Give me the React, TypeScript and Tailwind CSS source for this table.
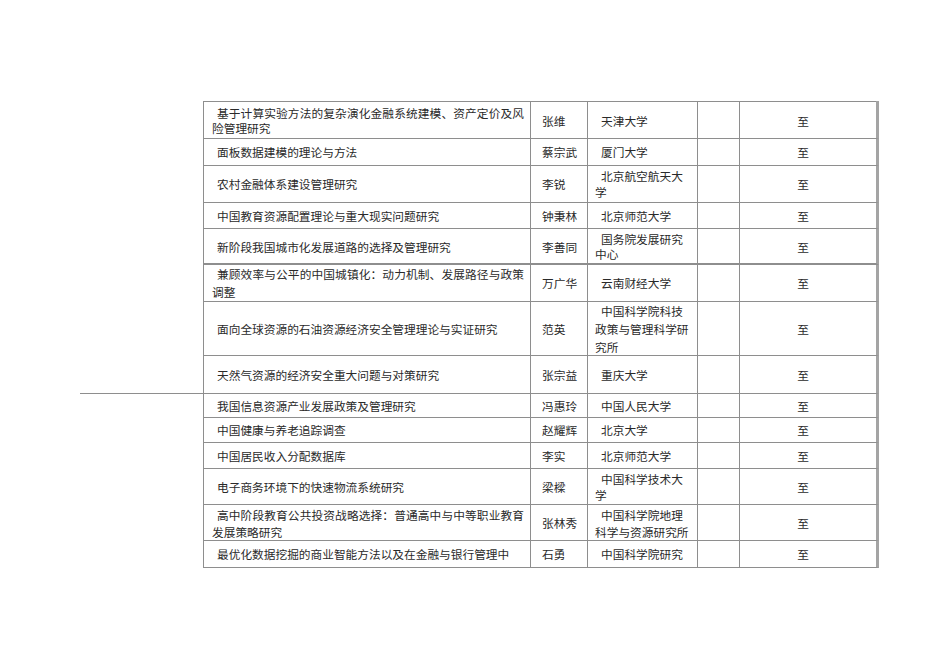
import React from "react";

type Row = {
  h: string;
  lh?: string;
  title: string;
  name: string;
  org: string;
  double?: boolean;
  stub?: boolean;
};

const rows: Row[] = [
  { h: "h-[37px]", lh: "leading-[15px]", title: "基于计算实验方法的复杂演化金融系统建模、资产定价及风险管理研究", name: "张维", org: "天津大学" },
  { h: "h-[27px]", title: "面板数据建模的理论与方法", name: "蔡宗武", org: "厦门大学" },
  { h: "h-[37px]", lh: "leading-[16px]", title: "农村金融体系建设管理研究", name: "李锐", org: "北京航空航天大学" },
  { h: "h-[26px]", title: "中国教育资源配置理论与重大现实问题研究", name: "钟秉林", org: "北京师范大学" },
  { h: "h-[36px]", lh: "leading-[15px]", title: "新阶段我国城市化发展道路的选择及管理研究", name: "李善同", org: "国务院发展研究中心", double: true },
  { h: "h-[37px]", lh: "leading-[18px]", title: "兼顾效率与公平的中国城镇化：动力机制、发展路径与政策调整", name: "万广华", org: "云南财经大学" },
  { h: "h-[54px]", lh: "leading-[18px]", title: "面向全球资源的石油资源经济安全管理理论与实证研究", name: "范英", org: "中国科学院科技政策与管理科学研究所" },
  { h: "h-[38px]", title: "天然气资源的经济安全重大问题与对策研究", name: "张宗益", org: "重庆大学", stub: true },
  { h: "h-[24px]", title: "我国信息资源产业发展政策及管理研究", name: "冯惠玲", org: "中国人民大学" },
  { h: "h-[25px]", title: "中国健康与养老追踪调查", name: "赵耀辉", org: "北京大学" },
  { h: "h-[26px]", title: "中国居民收入分配数据库", name: "李实", org: "北京师范大学" },
  { h: "h-[36px]", lh: "leading-[16px]", title: "电子商务环境下的快速物流系统研究", name: "梁樑", org: "中国科学技术大学" },
  { h: "h-[36px]", lh: "leading-[17px]", title: "高中阶段教育公共投资战略选择：普通高中与中等职业教育发展策略研究", name: "张林秀", org: "中国科学院地理科学与资源研究所" },
  { h: "h-[27px]", title: "最优化数据挖掘的商业智能方法以及在金融与银行管理中", name: "石勇", org: "中国科学院研究" },
];

export default function App() {
  return (
    <div
      className="w-[950px] h-[672px] bg-white text-[#2a2a2a] text-[11.7px] pt-[101px] pl-[80px]"
      style={{ fontFamily: '"Noto Sans CJK SC", "Noto Sans", sans-serif' }}
    >
      {/* table top edge */}
      <div className="flex">
        <div className="w-[123px] shrink-0" />
        <div className="w-[676px] h-[1px] bg-[#8e8e8e] border-r-[3px] border-[#a4a4a4] box-border" />
      </div>
      {rows.map((r, i) => (
        <div key={i} className={`flex ${r.h} ${r.lh ?? "leading-[16px]"}`}>
          <div className={`w-[123px] shrink-0 ${r.stub ? "border-b border-[#8e8e8e]" : ""}`} />
          <div
            className={`flex w-[676px] border-l border-r-[3px] border-l-[#8e8e8e] border-r-[#a4a4a4] ${
              r.double ? "border-b-2 border-b-[#8e8e8e]" : "border-b border-b-[#8e8e8e]"
            }`}
          >
            <div className="w-[327px] shrink-0 border-r border-[#8e8e8e] pl-[8px] pr-[6px] flex items-center">
              <p className="text-justify indent-[5px] w-full">{r.title}</p>
            </div>
            <div className="w-[57px] shrink-0 border-r border-[#8e8e8e] pl-[11px] flex items-center whitespace-nowrap">
              {r.name}
            </div>
            <div className="w-[110px] shrink-0 border-r border-[#8e8e8e] pl-[7px] pr-[5px] flex items-center">
              <p className="indent-[6px] w-full">{r.org}</p>
            </div>
            <div className="w-[42px] shrink-0 border-r border-[#8e8e8e]" />
            <div className="w-[136px] shrink-0 pr-[10px] flex items-center justify-center">至</div>
          </div>
        </div>
      ))}
    </div>
  );
}
